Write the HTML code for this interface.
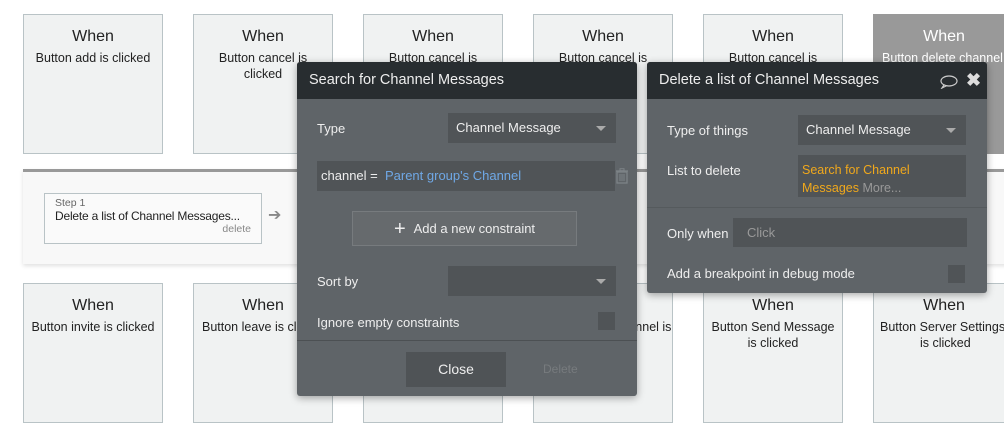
<!DOCTYPE html>
<html><head><style>
*{box-sizing:border-box;margin:0;padding:0}
body{width:1004px;height:414px;background:#fff;position:relative;overflow:hidden;font-family:"Liberation Sans",sans-serif;color:#222}
.card{position:absolute;width:140px;background:#f0f2f2;border:1px solid #b9c3c6;text-align:center}
.card .w{font-size:16px;margin-top:12px;line-height:20px}
.card .t{font-size:12.5px;line-height:16px;margin-top:3px;padding:0 4px;white-space:nowrap}
.abs{position:absolute}
.dlg{position:absolute;background:#5f6468;border-radius:3px;box-shadow:0 2px 8px rgba(0,0,0,.35);color:#eee;font-size:13px}
.hd{background:#282d30;height:37px;line-height:37px;padding-left:12px;font-size:14.5px;color:#eee;border-radius:3px 3px 0 0}
.sel{position:absolute;background:#505457;color:#eee;font-size:13px;line-height:30px;padding-left:8px}
.arr{position:absolute;right:10px;top:13px;width:0;height:0;border-left:5px solid transparent;border-right:5px solid transparent;border-top:5px solid #aaa}
.chk{position:absolute;background:#505457;width:17px;height:18px}
</style></head><body>
<div class="card" style="left:23px;top:14px;height:140px"><div class="w">When</div><div class="t">Button add is clicked</div></div>
<div class="card" style="left:193px;top:14px;height:140px"><div class="w">When</div><div class="t">Button cancel is<br>clicked</div></div>
<div class="card" style="left:363px;top:14px;height:140px"><div class="w">When</div><div class="t">Button cancel is<br>clicked</div></div>
<div class="card" style="left:533px;top:14px;height:140px"><div class="w">When</div><div class="t">Button cancel is<br>clicked</div></div>
<div class="card" style="left:703px;top:14px;height:140px"><div class="w">When</div><div class="t">Button cancel is<br>clicked</div></div>
<div class="card" style="left:873px;top:14px;height:140px;width:150px;background:#999;border-color:#999;color:#fff"><div class="w" style="width:140px">When</div><div class="t" style="text-align:left;padding-left:8px">Button delete channel</div></div>

<div class="abs" style="left:23px;top:169px;width:990px;height:95px;background:#f8f8f8;border-top:3px solid #999;box-shadow:0 2px 4px rgba(0,0,0,.12)"></div>
<div class="abs" style="left:44px;top:193px;width:218px;height:51px;border:1px solid #b9c3c6;background:#fafafa">
<div style="font-size:10.5px;color:#666;padding:3px 0 0 10px">Step 1</div>
<div style="font-size:12px;padding-left:10px;color:#222;white-space:nowrap;letter-spacing:-0.2px">Delete a list of Channel Messages...</div>
<div style="font-size:10.5px;color:#888;text-align:right;padding-right:10px">delete</div></div>
<div class="abs" style="left:268px;top:205px;font-size:16px;color:#888">➔</div>

<div class="card" style="left:23px;top:283px;height:140px"><div class="w">When</div><div class="t">Button invite is clicked</div></div>
<div class="card" style="left:193px;top:283px;height:140px"><div class="w">When</div><div class="t" style="text-align:left;padding-left:8px">Button leave is clicked</div></div>
<div class="card" style="left:363px;top:283px;height:140px"></div>
<div class="card" style="left:533px;top:283px;height:140px"><div class="w">When</div><div class="t" style="text-align:right;padding-right:6px">Button delete channel is</div></div>
<div class="card" style="left:703px;top:283px;height:140px"><div class="w">When</div><div class="t">Button Send Message<br>is clicked</div></div>
<div class="card" style="left:873px;top:283px;height:140px;width:150px"><div class="w" style="width:140px">When</div><div class="t" style="width:140px;padding:0 0 0 6px;text-align:left">Button Server Settings<br><span style="padding-left:40px">is clicked</span></div></div>

<div class="dlg" style="left:297px;top:62px;width:340px;height:334px">
<div class="hd">Search for Channel Messages</div>
<div class="abs" style="left:20px;top:59px">Type</div>
<div class="sel" style="left:151px;top:51px;width:168px">Channel Message<div class="arr"></div></div>
<div class="sel" style="left:20px;top:99px;width:298px;padding-left:4px">channel = &nbsp;<span style="color:#6fa8e6">Parent group's Channel</span></div>
<svg class="abs" style="left:318px;top:106px" width="14" height="16" viewBox="0 0 14 16"><rect x="2" y="4" width="10" height="11" fill="none" stroke="#7d8387" stroke-width="1.3"/><line x1="1" y1="3" x2="13" y2="3" stroke="#7d8387" stroke-width="1.3"/><rect x="5" y="0.7" width="4" height="2" fill="none" stroke="#7d8387"/><line x1="5" y1="6" x2="5" y2="13" stroke="#7d8387"/><line x1="7" y1="6" x2="7" y2="13" stroke="#7d8387"/><line x1="9" y1="6" x2="9" y2="13" stroke="#7d8387"/></svg>
<div class="abs" style="left:55px;top:149px;width:225px;height:35px;background:#666a6d;border:1px solid #777b7e;line-height:33px;text-align:center;font-size:13px"><span style="font-size:20px;vertical-align:-2px;margin-right:8px">+</span>Add a new constraint</div>
<div class="abs" style="left:20px;top:212px">Sort by</div>
<div class="sel" style="left:151px;top:204px;width:168px;height:30px"><div class="arr"></div></div>
<div class="abs" style="left:20px;top:253px">Ignore empty constraints</div>
<div class="chk" style="left:301px;top:250px"></div>
<div class="abs" style="left:0;top:278px;width:340px;border-top:1px solid #4c5053"></div>
<div class="abs" style="left:109px;top:290px;width:100px;height:35px;background:#4f5356;line-height:35px;text-align:center;font-size:14px">Close</div>
<div class="abs" style="left:246px;top:300px;color:#777b7e;font-size:12px">Delete</div>
</div>

<div class="dlg" style="left:647px;top:62px;width:340px;height:231px">
<div class="hd">Delete a list of Channel Messages</div>
<svg class="abs" style="left:293px;top:13px" width="18" height="14" viewBox="0 0 18 14"><ellipse cx="9" cy="6" rx="8" ry="5" fill="none" stroke="#ccc" stroke-width="1.2"/><path d="M4 10 L2 13 L7 10.5" fill="none" stroke="#ccc" stroke-width="1.2"/></svg>
<div class="abs" style="left:319px;top:8px;font-size:18px;color:#ddd;font-weight:bold">✖</div>
<div class="abs" style="left:20px;top:61px">Type of things</div>
<div class="sel" style="left:151px;top:53px;width:168px">Channel Message<div class="arr"></div></div>
<div class="abs" style="left:20px;top:101px">List to delete</div>
<div class="abs" style="left:151px;top:93px;width:168px;height:42px;background:#505457;padding:6px 0 0 4px;font-size:12.5px;line-height:18px;color:#f0a81c">Search for Channel<br>Messages <span style="color:#999">More...</span></div>
<div class="abs" style="left:0;top:145px;width:340px;border-top:1px solid #555a5d"></div>
<div class="abs" style="left:20px;top:164px">Only when</div>
<div class="sel" style="left:86px;top:156px;width:234px;height:29px;line-height:29px;color:#999;padding-left:14px">Click</div>
<div class="abs" style="left:20px;top:204px">Add a breakpoint in debug mode</div>
<div class="chk" style="left:301px;top:203px"></div>
</div>
</body></html>
